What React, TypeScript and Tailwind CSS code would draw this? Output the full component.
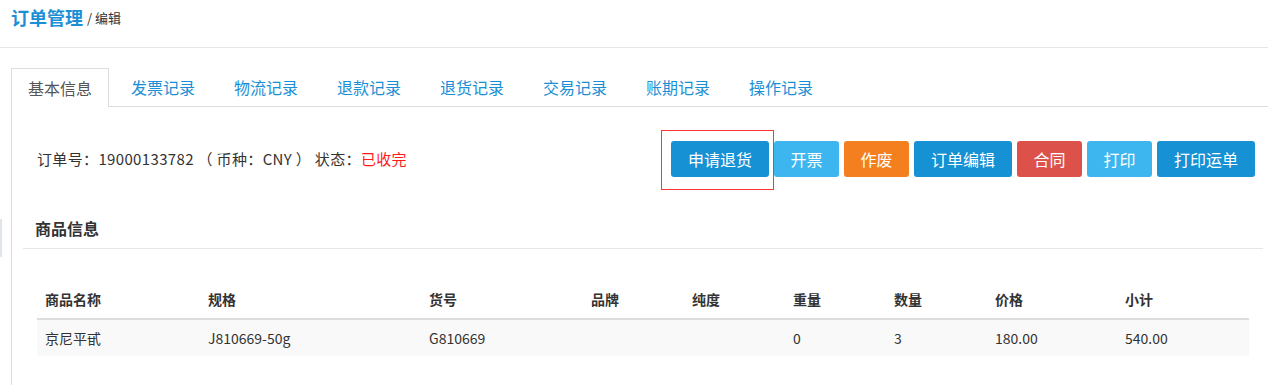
import React from 'react';

const tabs = ['基本信息', '发票记录', '物流记录', '退款记录', '退货记录', '交易记录', '账期记录', '操作记录'];

interface ActionButton {
  label: string;
  color: string;
  marked?: boolean;
}

const actions: ActionButton[] = [
  { label: '申请退货', color: 'bg-[#1591d4]', marked: true },
  { label: '开票', color: 'bg-[#3db6ef]' },
  { label: '作废', color: 'bg-[#f37f1f]' },
  { label: '订单编辑', color: 'bg-[#1591d4]' },
  { label: '合同', color: 'bg-[#dc524b]' },
  { label: '打印', color: 'bg-[#3db6ef]' },
  { label: '打印运单', color: 'bg-[#1591d4]' },
];

// column widths in px, starting at the table's left edge
const columns = [
  { title: '商品名称', width: 'w-[163px]' },
  { title: '规格', width: 'w-[221px]' },
  { title: '货号', width: 'w-[162px]' },
  { title: '品牌', width: 'w-[101px]' },
  { title: '纯度', width: 'w-[101px]' },
  { title: '重量', width: 'w-[101px]' },
  { title: '数量', width: 'w-[101px]' },
  { title: '价格', width: 'w-[130px]' },
  { title: '小计', width: 'w-[132px]' },
];

const rows = [['京尼平甙', 'J810669-50g', 'G810669', '', '', '0', '3', '180.00', '540.00']];

export default function App() {
  return (
    <div className="relative min-h-[385px] w-[1268px] overflow-hidden bg-white font-[family-name:'Noto_Sans_CJK_SC','Noto_Sans',sans-serif] text-[#333]">
      {/* Page header */}
      <div className="flex h-[48px] items-start border-b border-[#e6e6e6] pl-[11px] pt-[4px]">
        <h1 className="text-[18px] leading-[26px] font-bold text-[#1a8fd6]">订单管理</h1>
        <span className="ml-[4px] mt-[4px] text-[13px] leading-[20px] text-[#333]">/ 编辑</span>
      </div>

      {/* Tabs */}
      <div className="mt-[20px] ml-[11px] flex border-b border-[#ddd]">
        {tabs.map((t, i) => (
          <div
            key={t}
            className={
              i === 0
                ? '-mb-px mr-[5px] flex h-[39px] w-[98px] items-center justify-center border border-b-0 border-[#ddd] bg-white text-[16px] text-[#555]'
                : 'mr-[5px] flex h-[38px] w-[98px] items-center justify-center text-[16px] text-[#1a8fd6]'
            }
          >
            {t}
          </div>
        ))}
      </div>

      {/* Tab panel */}
      <div className="ml-[11px] border-l border-[#ddd] pl-[11px] pr-[5px] pb-[40px]">
        <div className="flex items-center justify-between pl-[14px] pr-[8px] pt-[34px]">
          <div className="text-[15px] leading-[22px] tracking-[0.35px]">
            订单号：19000133782 （ 币种：CNY ） 状态：<span className="text-[#ff1a1a]">已收完</span>
          </div>
          <div className="flex gap-[5px]">
            {actions.map((a) => (
              <div key={a.label} className="relative">
                <button
                  className={`h-[36px] rounded-[3px] text-[16px] text-white ${a.color} ${
                    a.label.length > 2 ? 'px-[17px]' : 'px-[16.5px]'
                  }`}
                >
                  {a.label}
                </button>
                {a.marked && (
                  <span className="pointer-events-none absolute -left-[10px] -top-[11px] h-[60px] w-[113px] border border-[#f33]" />
                )}
              </div>
            ))}
          </div>
        </div>

        <div className="mt-[31px] flex h-[41px] items-center border-b border-[#e6e6e6] pl-[12px]">
          <h2 className="text-[16px] font-bold text-[#333]">商品信息</h2>
        </div>

        <table className="mt-[31px] ml-[14px] w-[1212px] table-fixed border-collapse text-[14px]">
          <thead>
            <tr className="h-[39px] border-b-2 border-[#ddd]">
              {columns.map((c) => (
                <th key={c.title} className={`${c.width} pl-[8px] text-left font-bold`}>
                  {c.title}
                </th>
              ))}
            </tr>
          </thead>
          <tbody>
            {rows.map((r, i) => (
              <tr key={i} className="h-[37px] bg-[#f9f9f9]">
                {r.map((v, j) => (
                  <td key={j} className="pl-[8px] text-left font-normal">
                    {v}
                  </td>
                ))}
              </tr>
            ))}
          </tbody>
        </table>
      </div>

      {/* Sidebar handle at the page edge */}
      <div className="absolute left-0 top-[219px] h-[38px] w-[2px] bg-[#dfe5ea]" />
    </div>
  );
}
